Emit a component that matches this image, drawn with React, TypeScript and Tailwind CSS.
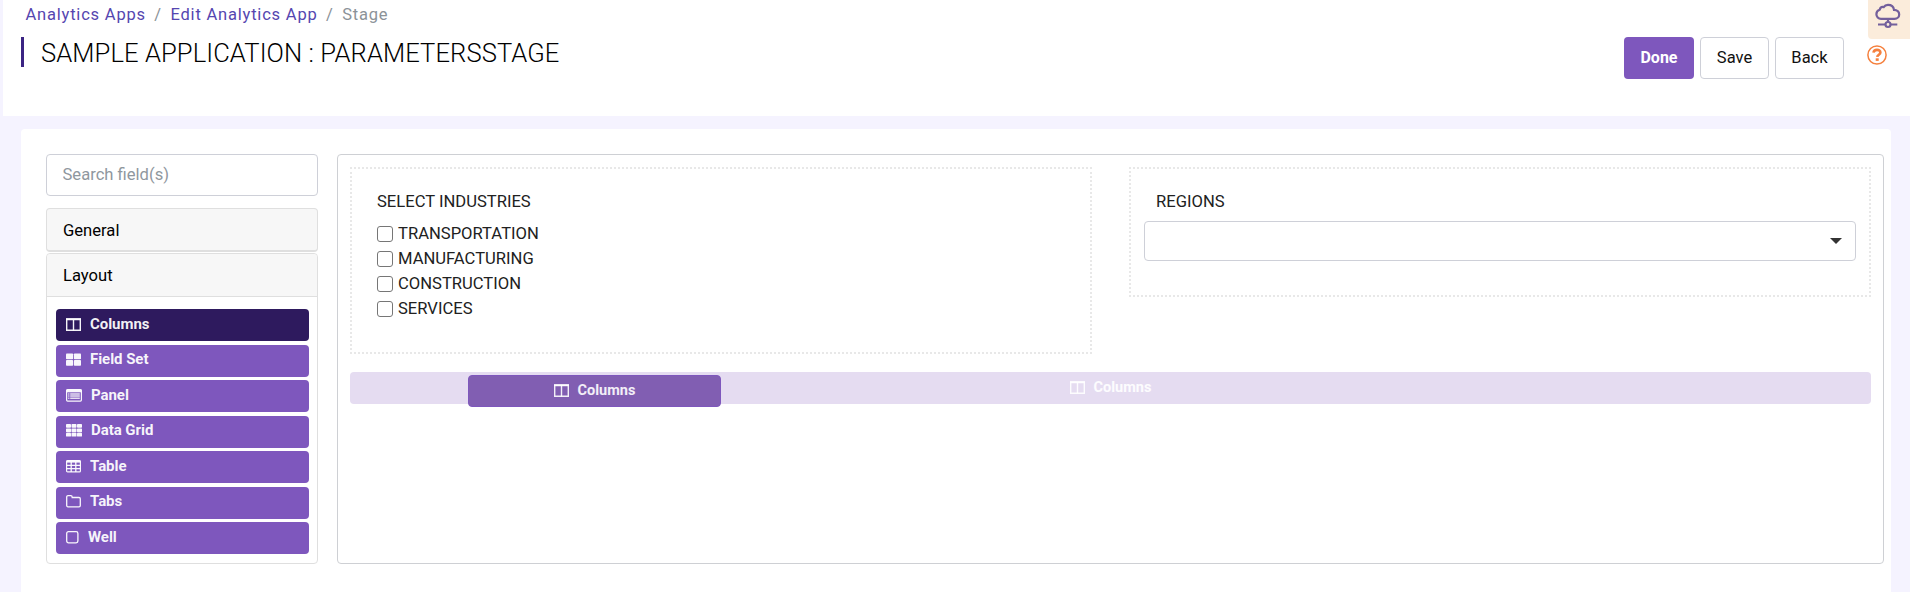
import React from "react";

type IconProps = { className?: string };

function ColumnsIcon({ className = "" }: IconProps) {
  return (
    <svg className={"block shrink-0 " + className} width="15" height="13" viewBox="0 0 15 13" fill="none" stroke="currentColor">
      <path d="M.7 1.500h13.600v10.800H.7z" strokeWidth="1.400" />
      <path d="M0 1h15" strokeWidth="1.800" />
      <path d="M7.500 1v11.500" strokeWidth="1.400" />
    </svg>
  );
}

function FieldSetIcon() {
  return (
    <svg className="block shrink-0" width="15" height="13" viewBox="0 0 15 13" fill="currentColor">
      <rect x="0" y="0.500" width="7.100" height="5.700" rx=".8" />
      <rect x="7.900" y="0.500" width="7.100" height="5.700" rx=".8" />
      <rect x="0" y="7" width="7.100" height="5.700" rx=".8" />
      <rect x="7.900" y="7" width="7.100" height="5.700" rx=".8" />
    </svg>
  );
}

function PanelIcon() {
  return (
    <svg className="block shrink-0" width="16" height="13" viewBox="0 0 16 13" fill="none" stroke="currentColor">
      <rect x=".6" y=".6" width="14.800" height="11.500" rx="1" strokeWidth="1.200" />
      <path d="M.5 1.900h15" strokeWidth="2.800" />
      <path d="M2.200 4.900h1.200M4.200 4.900h9.600M2.200 7.100h1.200M4.200 7.100h9.600M2.200 9.300h1.200M4.200 9.300h9.600" strokeWidth="1.500" opacity=".85" />
    </svg>
  );
}

function DataGridIcon() {
  return (
    <svg className="block shrink-0" width="16" height="13" viewBox="0 0 16 13" fill="currentColor">
      {[0, 4.4, 8.8].map((y) =>
        [0, 5.5, 11].map((x) => <rect key={x + "-" + y} x={x} y={y} width="5" height="3.800" rx=".7" />)
      )}
    </svg>
  );
}

function TableIcon() {
  return (
    <svg className="block shrink-0" width="15" height="13" viewBox="0 0 15 13" fill="none" stroke="currentColor">
      <rect x=".6" y=".6" width="13.800" height="11.300" rx="1" strokeWidth="1.200" />
      <path d="M.5 1.500h14" strokeWidth="2.200" />
      <path d="M.5 5.400h14M.5 8.600h14M5.200 2v10M9.800 2v10" strokeWidth="1.300" />
    </svg>
  );
}

function TabsIcon() {
  return (
    <svg className="block shrink-0" width="15" height="13" viewBox="0 0 15 13" fill="none" stroke="currentColor" strokeWidth="1.300">
      <path d="M.7 2.100C.7 1.200 1.300.7 2 .7h2.800c.8 0 1.400.6 1.400 1.500v.3H13c.8 0 1.300.6 1.300 1.300v6.600c0 .8-.6 1.400-1.300 1.400H2c-.8 0-1.300-.6-1.300-1.400z" />
    </svg>
  );
}

function WellIcon() {
  return (
    <svg className="block shrink-0" width="13" height="13" viewBox="0 0 13 13" fill="none" stroke="currentColor" strokeWidth="1.300">
      <rect x=".7" y=".7" width="11.200" height="11.200" rx="1.800" />
    </svg>
  );
}

function CloudIcon() {
  return (
    <svg className="block" width="26" height="26" viewBox="0 0 26 26" fill="none" stroke="#735f9c" strokeWidth="2.200">
      <path d="M6 15.800C3.300 15.800 1.400 13.600 1.400 11.200c0-2.300 1.400-3.900 3.300-4.500C5.200 4.600 7 3.700 8.700 4.100 9.700 2.500 11.200 1.900 13 1.900c3.100 0 5.600 2 6 5 3 .1 5.200 1.900 5.200 4.500 0 2.500-1.900 4.400-4.700 4.400z" />
      <path d="M13 15.800v3M3 21.500h7.300M15.700 21.500h6.600" />
      <circle cx="13" cy="21.500" r="2.500" />
    </svg>
  );
}

function HelpIcon() {
  return (
    <svg className="block" width="20" height="20" viewBox="0 0 20 20" fill="none" stroke="#f5803e">
      <circle cx="10" cy="10" r="9.100" strokeWidth="1.500" />
      <path d="M6.500 7.700c.2-1.800 1.600-2.800 3.500-2.800 2 0 3.400 1 3.400 2.600 0 2.200-3 2.200-3.200 4.400" strokeWidth="2.600" />
      <path d="M8.700 14.600h3" strokeWidth="2.600" />
    </svg>
  );
}

const components = [
  { label: "Columns", icon: <ColumnsIcon />, active: true },
  { label: "Field Set", icon: <FieldSetIcon /> },
  { label: "Panel", icon: <PanelIcon /> },
  { label: "Data Grid", icon: <DataGridIcon /> },
  { label: "Table", icon: <TableIcon /> },
  { label: "Tabs", icon: <TabsIcon /> },
  { label: "Well", icon: <WellIcon /> },
];

const industries = ["TRANSPORTATION", "MANUFACTURING", "CONSTRUCTION", "SERVICES"];

function Header() {
  return (
    <header className="ml-[3px] flex h-[116px] justify-between bg-white">
      <div>
        <nav className="flex h-[29px] items-center gap-[8.500px] pt-0.5 pl-[22.500px] text-[16.500px] tracking-[0.800px] text-[#8b9298]">
          <a className="text-[#5546b0]">Analytics Apps</a>
          <span>/</span>
          <a className="text-[#5546b0]">Edit Analytics App</a>
          <span>/</span>
          <span>Stage</span>
        </nav>
        <div className="mt-2 ml-[18px] flex h-[30px] items-center border-l-3 border-[#3b2483] pt-px pl-[17px]">
          <h1 className="text-[25.600px] leading-[30px] font-light tracking-[0.080px] whitespace-nowrap text-black">SAMPLE APPLICATION : PARAMETERSSTAGE</h1>
        </div>
      </div>
      <div className="flex">
        <div className="mt-[37px] mr-6 flex gap-1.5">
          <button className="h-[42px] w-[70px] rounded bg-[#7e57bd] text-base font-bold text-white">Done</button>
          <button className="h-[42px] w-[69px] rounded border border-[#ced0d8] text-[16.500px] text-[#111]">Save</button>
          <button className="h-[42px] w-[69px] rounded border border-[#ced0d8] text-[16.500px] text-[#111]">Back</button>
        </div>
        <div className="w-[42px]">
          <div className="h-[39px] rounded-bl bg-[#fbecdb] pt-[3px] pl-[7px]">
            <CloudIcon />
          </div>
          <div className="-ml-[1px] pt-1.5">
            <HelpIcon />
          </div>
        </div>
      </div>
    </header>
  );
}

function Sidebar() {
  return (
    <aside className="w-[272px]">
      <input
        className="block h-[42px] w-full rounded border border-[#ced0d8] pr-4 pb-[1px] pl-[15.500px] text-[16.600px] placeholder:text-[#8f979e]"
        placeholder="Search field(s)"
      />
      <div className="mt-3 flex h-11 items-center rounded border border-b-2 border-[#dfdfdf] bg-[#f7f7f7] px-4 pt-[3px] text-[16.600px] text-black">General</div>
      <div className="mt-px h-[311px] rounded border border-[#dfdfdf]">
        <div className="flex h-[43px] items-center rounded-t border-b border-[#dfdfdf] bg-[#f7f7f7] px-4 pt-0.5 text-[16.600px] text-black">Layout</div>
        <div className="flex flex-col gap-[3.500px] pt-3 pr-2 pl-[9px]">
          {components.map((c) => (
            <div
              key={c.label}
              className={
                "flex h-8 items-center gap-[9px] rounded pb-[2px] pl-2.5 text-[15px] font-bold text-white/95 " +
                (c.active ? "bg-[#2e1a5e]" : "bg-[#7e57bd]")
              }
            >
              {c.icon}
              <span className="tracking-[-0.050px]">{c.label}</span>
            </div>
          ))}
        </div>
      </div>
    </aside>
  );
}

function Canvas() {
  return (
    <section className="h-[410px] w-[1547px] rounded border border-[#ced0d4] px-3 pt-3">
      <div className="flex h-[187px] items-start justify-between">
        <div className="h-[187px] w-[742px] border-2 border-dotted border-[#e8e8e8] pt-[21px] pl-[25px] text-[16.600px] text-[#212121]">
          <div className="h-[31px] leading-6">SELECT INDUSTRIES</div>
          {industries.map((name) => (
            <label key={name} className="flex h-[25px] items-center gap-[5px]">
              <span className="size-4 rounded-[3px] border border-[#767676] bg-white" />
              <span className="pt-px">{name}</span>
            </label>
          ))}
        </div>
        <div className="h-[130px] w-[742px] border-2 border-dotted border-[#e8e8e8] px-[13px] pt-[21px] text-[16.600px] text-[#212121]">
          <div className="h-[31px] pl-3 leading-6">REGIONS</div>
          <div className="flex h-10 items-center justify-end rounded border border-[#ced0d8] pr-[13px]">
            <svg width="12" height="6" viewBox="0 0 12 6" fill="#333">
              <path d="M0 0h12L6 6z" />
            </svg>
          </div>
        </div>
      </div>
      <div className="relative mt-[18px] flex h-8 items-center justify-center gap-[9px] rounded bg-[#e5dcf1] pb-[1px] text-[14.500px] font-bold text-white/90">
        <ColumnsIcon />
        <span>Columns</span>
        <div className="absolute top-[3px] left-[118px] flex h-8 w-[253px] items-center justify-center gap-[9px] rounded border border-[#7e57bd] bg-[#815eb2] pb-[1px]">
          <ColumnsIcon />
          <span>Columns</span>
        </div>
      </div>
    </section>
  );
}

export default function App() {
  return (
    <div className="h-[592px] w-[1910px] overflow-hidden bg-[#f5f3ff] font-['Roboto',sans-serif]">
      <Header />
      <main className="mt-[13px] ml-[21px] flex h-[463px] w-[1870px] gap-[19px] rounded-t bg-white pt-[25px] pl-[25px]">
        <Sidebar />
        <Canvas />
      </main>
    </div>
  );
}
